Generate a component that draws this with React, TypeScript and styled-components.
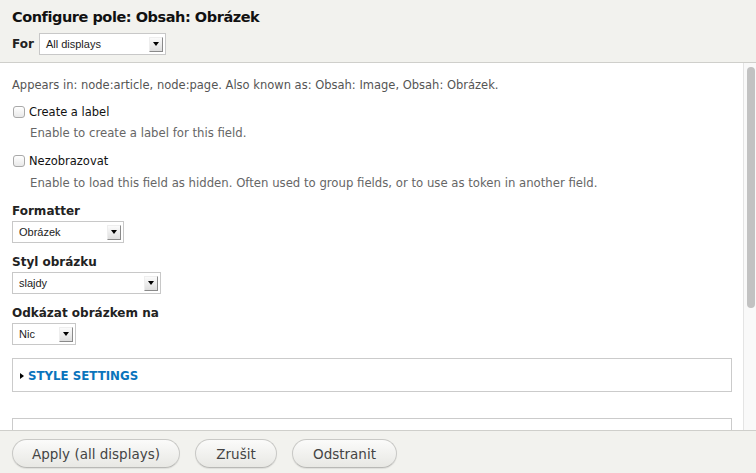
import React from "react";
import styled, { createGlobalStyle } from "styled-components";

const Global = createGlobalStyle`
  html, body { margin: 0; padding: 0; height: 100%; }
  body { background: #fff; font-family: "DejaVu Sans", Verdana, sans-serif; color: #222; }
  #root { height: 100%; }
`;

const Page = styled.div`
  width: 756px;
  height: 473px;
  display: flex;
  flex-direction: column;
  overflow: hidden;
`;

const Header = styled.header`
  height: 63px;
  flex: none;
  box-sizing: border-box;
  background: #f2f2ee;
  border-bottom: 1px solid #cfcfcb;
  padding: 8px 12px 0;
  display: flex;
  flex-direction: column;
  gap: 6px;
`;

const Title = styled.h1`
  margin: 0;
  font-size: 14.5px;
  letter-spacing: -0.45px;
  line-height: 19px;
  font-weight: bold;
  color: #111;
`;

const ForRow = styled.div`
  display: flex;
  align-items: center;
  gap: 5px;
`;

const BoldLabel = styled.div`
  font-size: 12px;
  font-weight: bold;
  color: #222;
  line-height: 16px;
`;

const SelectBox = styled.div<{ $w: number }>`
  width: ${(p) => p.$w}px;
  height: 22px;
  box-sizing: border-box;
  border: 1px solid #c8c8c8;
  background: #fff;
  display: flex;
  align-items: center;
  padding-left: 6px;
  font-family: "Liberation Sans", Arial, sans-serif;
  font-size: 11px;
  color: #222;
`;

const SelectText = styled.span`
  flex: 1;
`;

const ArrowBox = styled.span`
  width: 14px;
  height: 15px;
  margin-right: 2px;
  box-sizing: border-box;
  background: linear-gradient(#fbfbfb, #dedede);
  border-right: 1px solid #8a8a8a;
  border-bottom: 1px solid #8a8a8a;
  border-top: 1px solid #eee;
  border-left: 1px solid #eee;
  display: flex;
  align-items: center;
  justify-content: center;
`;

const Caret = styled.span`
  width: 0;
  height: 0;
  border-left: 3.5px solid transparent;
  border-right: 3.5px solid transparent;
  border-top: 4px solid #000;
`;

const Body = styled.div`
  flex: 1;
  min-height: 0;
  display: flex;
  background: #fff;
`;

const Content = styled.main`
  flex: 1;
  overflow: hidden;
`;

const ScrollTrack = styled.div`
  width: 13px;
  flex: none;
  box-sizing: border-box;
  background: #f9f9f9;
  border-left: 1px solid #e4e4e4;
  padding: 4px 1px 0 3px;
`;

const ScrollThumb = styled.div`
  width: 8px;
  height: 241px;
  border-radius: 5px;
  background: #c2c2c2;
`;

const Inner = styled.div`
  padding: 14px 11px 40px 12px;
  display: flex;
  flex-direction: column;
`;

const Appears = styled.p`
  margin: 0 0 11px;
  font-size: 11.5px;
  line-height: 16px;
  color: #555;
`;

const CheckRow = styled.label`
  display: flex;
  align-items: center;
  gap: 4px;
  font-size: 11.5px;
  line-height: 16px;
  color: #111;
  margin-left: 1px;
`;

const CheckBox = styled.span`
  width: 12px;
  height: 12px;
  box-sizing: border-box;
  border: 1px solid #a9a9a9;
  border-radius: 3px;
  background: linear-gradient(#fff, #e9e9e9);
`;

const Desc = styled.div<{ $before: number; $after: number }>`
  font-size: 11.7px;
  line-height: 16px;
  color: #666;
  margin: ${(p) => p.$before}px 0 ${(p) => p.$after}px 18px;
`;

const Field = styled.div`
  display: flex;
  flex-direction: column;
  gap: 2px;
  margin-bottom: 11px;
`;

const Fieldset = styled.div<{ $h: number; $top: number }>`
  height: ${(p) => p.$h}px;
  box-sizing: border-box;
  border: 1px solid #cbcbcb;
  margin-top: ${(p) => p.$top}px;
  padding: 10px 7px;
  display: flex;
  align-items: flex-start;
  gap: 4px;
  flex: none;
`;

const Tri = styled.span`
  margin-top: 4px;
  width: 0;
  height: 0;
  border-top: 3.5px solid transparent;
  border-bottom: 3.5px solid transparent;
  border-left: 4px solid #000;
`;

const Legend = styled.span`
  font-size: 11.8px;
  line-height: 15px;
  font-weight: bold;
  color: #0a74bc;
  text-transform: uppercase;
`;

const Footer = styled.footer`
  height: 43px;
  flex: none;
  box-sizing: border-box;
  background: #f2f2ee;
  border-top: 1px solid #cfcfcb;
  display: flex;
  align-items: flex-start;
  padding: 8px 12px 0;
  gap: 15px;
`;

const Button = styled.button<{ $w: number }>`
  width: ${(p) => p.$w}px;
  height: 29px;
  border-radius: 15px;
  border: 1px solid #c9c9c6;
  border-bottom-color: #b9b9b6;
  background: linear-gradient(#fbfbfa, #e8e8e4);
  font-family: "DejaVu Sans", Verdana, sans-serif;
  font-size: 13.5px;
  color: #444;
  padding: 0;
  box-shadow: 0 1px 1px rgba(0,0,0,0.08);
`;

function Select({ w, value }: { w: number; value: string }) {
  return (
    <SelectBox $w={w}>
      <SelectText>{value}</SelectText>
      <ArrowBox>
        <Caret />
      </ArrowBox>
    </SelectBox>
  );
}

export default function App() {
  return (
    <Page>
      <Global />
      <Header>
        <Title>Configure pole: Obsah: Obrázek</Title>
        <ForRow>
          <BoldLabel>For</BoldLabel>
          <Select w={127} value="All displays" />
        </ForRow>
      </Header>
      <Body>
        <Content>
          <Inner>
            <Appears>
              Appears in: node:article, node:page. Also known as: Obsah: Image, Obsah: Obrázek.
            </Appears>
            <CheckRow>
              <CheckBox />
              Create a label
            </CheckRow>
            <Desc $before={5} $after={12}>Enable to create a label for this field.</Desc>
            <CheckRow>
              <CheckBox />
              Nezobrazovat
            </CheckRow>
            <Desc $before={6} $after={12}>
              Enable to load this field as hidden. Often used to group fields, or to use as token in another field.
            </Desc>
            <Field>
              <BoldLabel>Formatter</BoldLabel>
              <Select w={112} value="Obrázek" />
            </Field>
            <Field>
              <BoldLabel>Styl obrázku</BoldLabel>
              <Select w={149} value="slajdy" />
            </Field>
            <Field>
              <BoldLabel>Odkázat obrázkem na</BoldLabel>
              <Select w={64} value="Nic" />
            </Field>
            <Fieldset $h={34} $top={2}>
              <Tri />
              <Legend>Style settings</Legend>
            </Fieldset>
            <Fieldset $h={150} $top={26} />
          </Inner>
        </Content>
        <ScrollTrack>
          <ScrollThumb />
        </ScrollTrack>
      </Body>
      <Footer>
        <Button $w={168}>Apply (all displays)</Button>
        <Button $w={82}>Zrušit</Button>
        <Button $w={105}>Odstranit</Button>
      </Footer>
    </Page>
  );
}
